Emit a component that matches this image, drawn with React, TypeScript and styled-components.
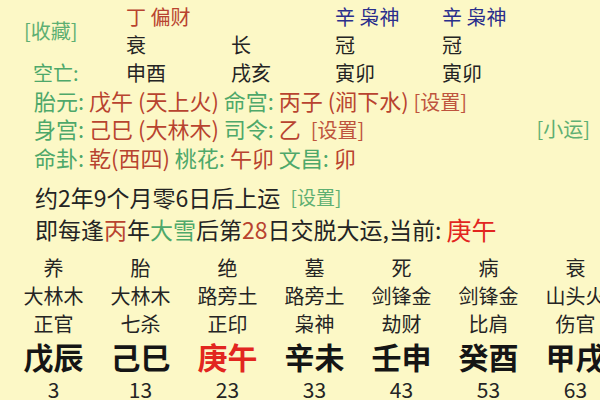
import React from "react";
import styled, { createGlobalStyle } from "styled-components";

const GREEN = "#4ea86a";
const RED = "#b8432f";
const BRIGHT = "#e2261f";
const BLUE = "#2a2e8c";
const INK = "#242424";

const GlobalStyle = createGlobalStyle`
  html, body { margin: 0; padding: 0; background: #fcf8c6; }
  body { font-family: "Noto Sans CJK SC", "Noto Sans", sans-serif; }
`;

const Page = styled.div`
  width: 600px;
  height: 400px;
  overflow: hidden;
  background: #fcf8c6;
  color: ${INK};
`;

const TopGrid = styled.div`
  display: grid;
  grid-template-columns: 93px 105px 104px 107px 1fr;
  grid-auto-rows: 28px;
  align-items: center;
  padding: 3px 0 0 33px;
  font-size: 20px;
  line-height: 28px;
  white-space: pre;
`;

type Tone = "green" | "red" | "bright" | "blue" | "ink";
const toneColor = (t?: Tone) =>
  t === "green" ? GREEN : t === "red" ? RED : t === "bright" ? BRIGHT : t === "blue" ? BLUE : INK;

const Cell = styled.span<{ $tone?: Tone }>`
  color: ${(p) => toneColor(p.$tone)};
`;

const Collect = styled.span`
  grid-row: span 2;
  margin-left: -9px;
  font-size: 20px;
  color: ${GREEN};
  opacity: 0.9;
`;

const InfoLine = styled.div`
  display: flex;
  align-items: center;
  justify-content: space-between;
  height: 28px;
  line-height: 28px;
  padding: 0 10px 0 34px;
  font-size: 22px;
  white-space: pre;
`;

const Txt = styled.span<{ $tone?: Tone; $size?: number }>`
  color: ${(p) => toneColor(p.$tone)};
  font-size: ${(p) => (p.$size ? `${p.$size}px` : "inherit")};
`;

const Tag = styled.span<{ $tone?: Tone; $size?: number }>`
  color: ${(p) => toneColor(p.$tone)};
  font-size: ${(p) => p.$size ?? 20}px;
  opacity: 0.9;
`;

const LuckLine = styled.div<{ $top?: number }>`
  display: flex;
  align-items: center;
  height: 32px;
  line-height: 32px;
  margin-top: ${(p) => p.$top ?? 0}px;
  padding-left: 35px;
  font-size: 23px;
  white-space: pre;
`;

const Pillars = styled.div`
  display: grid;
  grid-template-columns: repeat(7, 87px);
  padding-left: 10px;
  margin-top: 9px;
`;

const Pillar = styled.div`
  display: flex;
  flex-direction: column;
  align-items: center;
  white-space: nowrap;
`;

const Small = styled.div`
  height: 28px;
  line-height: 28px;
  font-size: 20px;
  color: ${INK};
`;

const Big = styled.div<{ $hot?: boolean }>`
  height: 36px;
  line-height: 36px;
  font-size: 30px;
  font-weight: 700;
  color: ${(p) => (p.$hot ? BRIGHT : "#151515")};
`;

const Age = styled.div`
  height: 30px;
  line-height: 30px;
  font-size: 21px;
  color: ${INK};
`;

const pillars = [
  { stage: "养", nayin: "大林木", god: "正官", gz: "戊辰", age: 3 },
  { stage: "胎", nayin: "大林木", god: "七杀", gz: "己巳", age: 13 },
  { stage: "绝", nayin: "路旁土", god: "正印", gz: "庚午", age: 23, hot: true },
  { stage: "墓", nayin: "路旁土", god: "枭神", gz: "辛未", age: 33 },
  { stage: "死", nayin: "剑锋金", god: "劫财", gz: "壬申", age: 43 },
  { stage: "病", nayin: "剑锋金", god: "比肩", gz: "癸酉", age: 53 },
  { stage: "衰", nayin: "山头火", god: "伤官", gz: "甲戌", age: 63 },
];

export default function App() {
  return (
    <Page>
      <GlobalStyle />
      <TopGrid>
        <Collect>[收藏]</Collect>
        <Cell $tone="red">丁 偏财</Cell>
        <Cell />
        <Cell $tone="blue">辛 枭神</Cell>
        <Cell $tone="blue">辛 枭神</Cell>
        <Cell>衰</Cell>
        <Cell>长</Cell>
        <Cell>冠</Cell>
        <Cell>冠</Cell>
        <Cell $tone="green">空亡:</Cell>
        <Cell>申酉</Cell>
        <Cell>戌亥</Cell>
        <Cell>寅卯</Cell>
        <Cell>寅卯</Cell>
      </TopGrid>

      <InfoLine>
        <span>
          <Txt $tone="green">胎元: </Txt>
          <Txt $tone="red">戊午 (天上火) </Txt>
          <Txt $tone="green">命宫: </Txt>
          <Txt $tone="red">丙子 (涧下水) </Txt>
          <Tag $tone="red">[设置]</Tag>
        </span>
      </InfoLine>
      <InfoLine>
        <span>
          <Txt $tone="green">身宫: </Txt>
          <Txt $tone="red">己巳 (大林木) </Txt>
          <Txt $tone="green">司令: </Txt>
          <Txt $tone="red">乙  </Txt>
          <Tag $tone="red">[设置]</Tag>
        </span>
        <Tag $tone="green">[小运]</Tag>
      </InfoLine>
      <InfoLine>
        <span>
          <Txt $tone="green">命卦: </Txt>
          <Txt $tone="red">乾(西四) </Txt>
          <Txt $tone="green">桃花: </Txt>
          <Txt $tone="red">午卯 </Txt>
          <Txt $tone="green">文昌: </Txt>
          <Txt $tone="red">卯</Txt>
        </span>
      </InfoLine>

      <LuckLine $top={10}>
        <Txt>约2年9个月零6日后上运  </Txt>
        <Tag $tone="green" $size={19}>[设置]</Tag>
      </LuckLine>
      <LuckLine>
        <Txt>即每逢</Txt>
        <Txt $tone="red">丙</Txt>
        <Txt>年</Txt>
        <Txt $tone="green">大雪</Txt>
        <Txt>后第</Txt>
        <Txt $tone="red">28</Txt>
        <Txt>日交脱大运,当前: </Txt>
        <Txt $tone="bright" $size={25}>庚午</Txt>
      </LuckLine>

      <Pillars>
        {pillars.map((p) => (
          <Pillar key={p.gz}>
            <Small>{p.stage}</Small>
            <Small>{p.nayin}</Small>
            <Small>{p.god}</Small>
            <Big $hot={p.hot}>{p.gz}</Big>
            <Age>{p.age}</Age>
          </Pillar>
        ))}
      </Pillars>
    </Page>
  );
}
